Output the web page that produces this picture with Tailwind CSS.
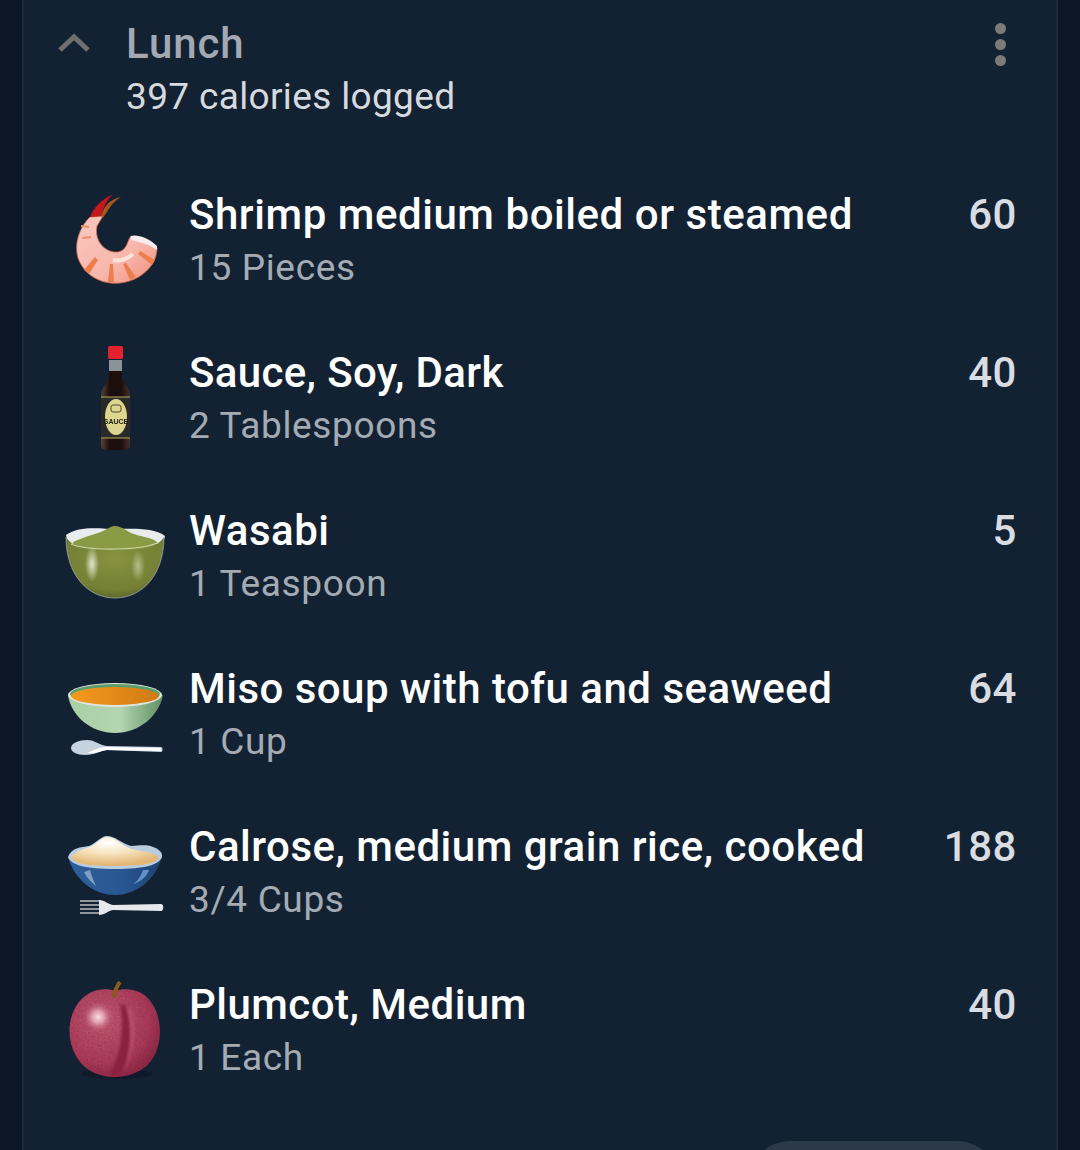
<!DOCTYPE html>
<html lang="en">
<head>
    <meta charset="UTF-8">
    <meta name="viewport" content="width=device-width, initial-scale=1.0">
    <title>Lunch</title>
    <script src="https://cdn.jsdelivr.net/npm/@tailwindcss/browser@4"></script>
</head>
<body class="bg-[#0c1828] font-['Roboto',sans-serif]">

    <!-- shared grain used on the plum -->
    <svg class="absolute h-0 w-0">
        <defs>
            <filter id="grain" x="0" y="0" width="100%" height="100%">
                <feTurbulence type="fractalNoise" baseFrequency="0.55" numOctaves="2" seed="4"/>
                <feColorMatrix values="0 0 0 0 0.12  0 0 0 0 0.02  0 0 0 0 0.06  1.6 0 0 0 -0.55"/>
                <feComposite in2="SourceGraphic" operator="in"/>
            </filter>
        </defs>
    </svg>

    <div class="relative mx-[22px] h-[1150px] overflow-hidden border-x-2 border-[#1a2a3c] bg-[#132233]">

        <!-- header -->
        <div class="flex h-[159px] items-start pt-[19px]">
            <svg class="ml-[33px] mt-[13px] h-[22px] w-[34px]" viewBox="0 0 34 22" fill="none">
                <path d="M3 18 L17 5 L31 18" stroke="#6f6f70" stroke-width="5"/>
            </svg>
            <div class="ml-[35px]">
                <div class="text-[42px] font-medium leading-[50px] tracking-[0.9px] text-[#a2a9b3]">Lunch</div>
                <div class="text-[37px] leading-[56px] tracking-[0.35px] text-[#d6dadf]">397 calories logged</div>
            </div>
            <div class="ml-auto mr-[50px] mt-[4px] flex flex-col gap-[5px]">
                <div class="h-[11px] w-[11px] rounded-full bg-[#7b7b7c]"></div>
                <div class="h-[11px] w-[11px] rounded-full bg-[#7b7b7c]"></div>
                <div class="h-[11px] w-[11px] rounded-full bg-[#7b7b7c]"></div>
            </div>
        </div>

        <!-- food rows -->
        <div class="flex h-[158px] items-center pr-[39px]">
            <svg class="ml-[41px] h-[100px] w-[100px] shrink-0 overflow-visible blur-[0.5px]" viewBox="0 0 100 100">
                <defs>
                    <linearGradient id="shrimpBody" x1="0" y1="0" x2="1" y2="1">
                        <stop offset="0" stop-color="#f7c9c2"/>
                        <stop offset="0.6" stop-color="#f9b6ab"/>
                        <stop offset="1" stop-color="#ee8f78"/>
                    </linearGradient>
                </defs>
                <path d="M25 29 C14 40 9 56 13 70 C19 87 36 97 55 95 C75 93 92 78 92 60 L66 48 C62 52 63 62 53 64 C40 65 29 53 32 38 L38 28 Z" fill="url(#shrimpBody)" stroke="#c9694a" stroke-width="0.8"/>
                <path d="M25 29 C29 19 36 12 48 6 C42 12 39 18 36 28 Z" fill="#c4161c"/>
                <path d="M36 28 C39 18 45 11 56 9 C47 14 44 21 38 30 Z" fill="#a8561c"/>
                <path d="M66 48 C72 46 84 50 92 58 L92 62 C84 56 74 54 66 52 Z" fill="#f4efee"/>
                <g fill="#ee7d4d">
                    <path d="M30 69 L33 72 L24 86 L19 82 Z"/>
                    <path d="M45 76 L48 76 L49 94 L43 94 Z"/>
                    <path d="M58 76 L61 75 L71 89 L65 92 Z"/>
                    <path d="M73 66 L75 63 L90 72 L87 77 Z"/>
                </g>
                <path d="M17 50 L26 49 M16 38 L24 39" stroke="#ee8d6a" stroke-width="2"/>
                <path d="M48 72 C56 74 62 71 68 66" stroke="#fde3da" stroke-width="4" fill="none"/>
            </svg>
            <div class="ml-[24px] mt-[8px] flex-1">
                <div class="flex items-center justify-between">
                    <div class="text-[42px] font-medium leading-[52px] tracking-[0.55px] text-white">Shrimp medium boiled or steamed</div>
                    <div class="pt-[1px] text-[42px] font-medium leading-[52px] tracking-[0.55px] text-[#d9dce0]">60</div>
                </div>
                <div class="-mt-px text-[37px] leading-[56px] tracking-[0.65px] text-[#a4abb3]">15 Pieces</div>
            </div>
        </div>

        <div class="flex h-[158px] items-center pr-[39px]">
            <svg class="ml-[41px] h-[100px] w-[100px] shrink-0 overflow-visible blur-[0.5px]" viewBox="0 0 100 100">
                <defs>
                    <linearGradient id="bottleGlass" x1="0" y1="0" x2="1" y2="0">
                        <stop offset="0" stop-color="#55413a"/>
                        <stop offset="0.3" stop-color="#1c0e0c"/>
                        <stop offset="0.7" stop-color="#1c0e0c"/>
                        <stop offset="1" stop-color="#4a3029"/>
                    </linearGradient>
                </defs>
                <path d="M44 14 L57 14 L57 30 C57 38 65 38 65 52 L65 100 C65 102 62 104 58 104 L43 104 C39 104 36 102 36 100 L36 52 C36 38 44 38 44 30 Z" fill="url(#bottleGlass)"/>
                <path d="M44 14 H57 V25 H44 Z" fill="#8b9299"/>
                <rect x="43" y="0" width="15" height="13" rx="1.5" fill="#e12330"/>
                <rect x="36" y="51" width="29" height="41" fill="#2a2a28"/>
                <path d="M36 51 H65 M36 92 H65" stroke="#b8a85a" stroke-width="1.2"/>
                <ellipse cx="51" cy="71" rx="11" ry="18" fill="#dcd68e"/>
                <rect x="46" y="59" width="10" height="7" rx="2" fill="none" stroke="#4f4b2c" stroke-width="1"/>
                <text x="51" y="78" text-anchor="middle" font-family="Liberation Sans" font-size="7" font-weight="700" fill="#1c1a0e">SAUCE</text>
            </svg>
            <div class="ml-[24px] mt-[8px] flex-1">
                <div class="flex items-center justify-between">
                    <div class="text-[42px] font-medium leading-[52px] tracking-[0.35px] text-white">Sauce, Soy, Dark</div>
                    <div class="pt-[1px] text-[42px] font-medium leading-[52px] tracking-[0.55px] text-[#d9dce0]">40</div>
                </div>
                <div class="-mt-px text-[37px] leading-[56px] tracking-[0.65px] text-[#a4abb3]">2 Tablespoons</div>
            </div>
        </div>

        <div class="flex h-[158px] items-center pr-[39px]">
            <svg class="ml-[41px] h-[100px] w-[100px] shrink-0 overflow-visible blur-[0.5px]" viewBox="0 0 100 100">
                <defs>
                    <radialGradient id="wasabiBowl" cx="0.5" cy="0.35" r="0.75">
                        <stop offset="0" stop-color="#87933f"/>
                        <stop offset="0.7" stop-color="#727f35"/>
                        <stop offset="1" stop-color="#4c5626"/>
                    </radialGradient>
                    <radialGradient id="wasabiShine">
                        <stop offset="0" stop-color="#eef0dc"/>
                        <stop offset="1" stop-color="#eef0dc" stop-opacity="0"/>
                    </radialGradient>
                </defs>
                <path d="M1 31 C14 21 38 25 50 25 C66 25 88 23 100 32 L98 40 L3 40 Z" fill="#e8ecef"/>
                <path d="M8 38 C20 32 34 30 44 24 C52 19 58 25 66 29 C76 33 86 33 92 38 L90 46 L10 46 Z" fill="#8b9a45"/>
                <path d="M1 33 C1 70 22 94 50 94 C78 94 99 70 99 33 C92 44 78 46 50 46 C22 46 8 44 1 33 Z" fill="url(#wasabiBowl)"/>
                <path d="M6 40 C22 47 78 47 94 38" stroke="#c9d2a4" stroke-width="1.2" fill="none"/>
                <ellipse cx="27" cy="60" rx="7" ry="18" fill="url(#wasabiShine)" opacity="0.9"/>
                <ellipse cx="73" cy="62" rx="7" ry="16" fill="url(#wasabiShine)" opacity="0.5"/>
                <path d="M1 33 C1 70 22 94 50 94 C78 94 99 70 99 33" stroke="#aab1b6" stroke-width="1" fill="none" opacity="0.7"/>
            </svg>
            <div class="ml-[24px] mt-[8px] flex-1">
                <div class="flex items-center justify-between">
                    <div class="text-[42px] font-medium leading-[52px] tracking-[0.5px] text-white">Wasabi</div>
                    <div class="pt-[1px] text-[42px] font-medium leading-[52px] tracking-[0.55px] text-[#d9dce0]">5</div>
                </div>
                <div class="-mt-px text-[37px] leading-[56px] tracking-[0.65px] text-[#a4abb3]">1 Teaspoon</div>
            </div>
        </div>

        <div class="flex h-[158px] items-center pr-[39px]">
            <svg class="ml-[41px] h-[100px] w-[100px] shrink-0 overflow-visible blur-[0.5px]" viewBox="0 0 100 100">
                <defs>
                    <linearGradient id="misoBowl" x1="0" y1="0" x2="1" y2="0">
                        <stop offset="0" stop-color="#a9cfa6"/>
                        <stop offset="0.55" stop-color="#b4d5b0"/>
                        <stop offset="1" stop-color="#5f8f63"/>
                    </linearGradient>
                    <linearGradient id="misoSoup" x1="0" y1="0" x2="1" y2="0">
                        <stop offset="0" stop-color="#f59a1e"/>
                        <stop offset="1" stop-color="#cf7a14"/>
                    </linearGradient>
                </defs>
                <path d="M3 33 C6 54 26 71 50 71 C74 71 94 54 98 33 Z" fill="url(#misoBowl)"/>
                <ellipse cx="50" cy="33" rx="47" ry="12" fill="#dfe8dc"/>
                <ellipse cx="50" cy="32" rx="45" ry="10" fill="#5f9c6b"/>
                <ellipse cx="50" cy="34" rx="44" ry="9" fill="url(#misoSoup)"/>
                <path d="M6 86 C6 81 14 78 22 78 C30 78 34 83 42 84 L96 85 C98 85 98 90 96 90 L42 88 C34 89 30 93 20 93 C12 93 6 90 6 86 Z" fill="#c6d3de"/>
                <path d="M22 91 C30 88 34 85 42 85 L96 86 L96 89 L42 88 C36 89 30 92 22 91 Z" fill="#ffffff"/>
            </svg>
            <div class="ml-[24px] mt-[8px] flex-1">
                <div class="flex items-center justify-between">
                    <div class="text-[42px] font-medium leading-[52px] tracking-[0.48px] text-white">Miso soup with tofu and seaweed</div>
                    <div class="pt-[1px] text-[42px] font-medium leading-[52px] tracking-[0.55px] text-[#d9dce0]">64</div>
                </div>
                <div class="-mt-px text-[37px] leading-[56px] tracking-[0.65px] text-[#a4abb3]">1 Cup</div>
            </div>
        </div>

        <div class="flex h-[158px] items-center pr-[39px]">
            <svg class="ml-[41px] h-[100px] w-[100px] shrink-0 overflow-visible blur-[0.5px]" viewBox="0 0 100 100">
                <defs>
                    <radialGradient id="riceMound" cx="0.42" cy="0.2" r="0.75">
                        <stop offset="0" stop-color="#ffffff"/>
                        <stop offset="0.45" stop-color="#f8e6c4"/>
                        <stop offset="1" stop-color="#e3b877"/>
                    </radialGradient>
                    <linearGradient id="riceBowl" x1="0" y1="0" x2="1" y2="0">
                        <stop offset="0" stop-color="#2f5f9e"/>
                        <stop offset="0.6" stop-color="#285690"/>
                        <stop offset="1" stop-color="#1f4270"/>
                    </linearGradient>
                </defs>
                <path d="M3 37 C8 56 26 75 50 75 C74 75 92 56 97 37 Z" fill="url(#riceBowl)"/>
                <path d="M3 37 C6 28 16 27 24 26 C30 24 36 16 42 16 C50 16 56 23 66 26 C74 26 80 24 88 27 C94 29 98 33 97 37 C94 45 80 49 50 49 C20 49 6 45 3 37 Z" fill="#b9cde0"/>
                <path d="M6 38 C10 30 20 29 27 26 C32 23 37 17 42 17 C50 17 56 25 66 29 C76 31 90 32 94 38 C90 44 76 46 50 46 C24 46 10 44 6 38 Z" fill="url(#riceMound)"/>
                <path d="M19 52 C22 58 26 62 31 66 C28 60 26 54 25 50 Z" fill="#a7bcd4" opacity="0.7"/>
                <path d="M78 50 C76 56 72 62 68 64 C76 62 82 56 84 50 Z" fill="#6ea3dc" opacity="0.8"/>
                <g stroke="#aeb4ba" stroke-width="1.6">
                    <path d="M15 81 H36"/>
                    <path d="M15 85 H36"/>
                    <path d="M15 89 H36"/>
                    <path d="M15 93 H36"/>
                </g>
                <path d="M34 80 C40 80 42 84 48 85 L96 84 C99 84 99 91 96 91 L48 90 C42 91 40 95 34 95 Z" fill="#e6e9ec"/>
            </svg>
            <div class="ml-[24px] mt-[8px] flex-1">
                <div class="flex items-center justify-between">
                    <div class="text-[42px] font-medium leading-[52px] tracking-[0.5px] text-white">Calrose, medium grain rice, cooked</div>
                    <div class="pt-[1px] text-[42px] font-medium leading-[52px] tracking-[0.55px] text-[#d9dce0]">188</div>
                </div>
                <div class="-mt-px text-[37px] leading-[56px] tracking-[0.65px] text-[#a4abb3]">3/4 Cups</div>
            </div>
        </div>

        <div class="flex h-[158px] items-center pr-[39px]">
            <svg class="ml-[41px] h-[100px] w-[100px] shrink-0 overflow-visible blur-[0.5px]" viewBox="0 0 100 100">
                <defs>
                    <radialGradient id="plumSkin" cx="0.38" cy="0.35" r="0.75">
                        <stop offset="0" stop-color="#c25a70"/>
                        <stop offset="0.65" stop-color="#ad3a58"/>
                        <stop offset="1" stop-color="#85203f"/>
                    </radialGradient>
                    <radialGradient id="plumShine">
                        <stop offset="0" stop-color="#f8dfe6"/>
                        <stop offset="0.4" stop-color="#eeb7c6" stop-opacity="0.75"/>
                        <stop offset="1" stop-color="#c45a76" stop-opacity="0"/>
                    </radialGradient>
                </defs>
                <ellipse cx="52" cy="96" rx="36" ry="5" fill="#0e1a2a"/>
                <path d="M50 13 C60 9 78 11 86 24 C98 40 97 66 88 80 C80 94 62 99 50 99 C36 99 20 94 11 78 C1 60 3 38 14 24 C24 11 40 9 50 13 Z" fill="url(#plumSkin)"/>
                <path d="M50 13 C60 9 78 11 86 24 C98 40 97 66 88 80 C80 94 62 99 50 99 C36 99 20 94 11 78 C1 60 3 38 14 24 C24 11 40 9 50 13 Z" fill="#000" filter="url(#grain)" opacity="0.4"/>
                <path class="blur-[1.5px]" d="M55 26 C60 46 56 80 44 97 C50 98 54 97 56 96 C66 78 68 46 60 27 Z" fill="#8a2140"/>
                <path class="blur-[1.5px]" d="M62 30 C69 48 67 76 58 94 C68 80 73 50 65 31 Z" fill="#c45a76" opacity="0.75"/>
                <circle cx="33" cy="39" r="15" fill="url(#plumShine)"/>
                <path d="M48 19 C50 14 51 9 55 4" stroke="#8a5a1e" stroke-width="4" fill="none"/>
            </svg>
            <div class="ml-[24px] mt-[8px] flex-1">
                <div class="flex items-center justify-between">
                    <div class="text-[42px] font-medium leading-[52px] tracking-[0.48px] text-white">Plumcot, Medium</div>
                    <div class="pt-[1px] text-[42px] font-medium leading-[52px] tracking-[0.55px] text-[#d9dce0]">40</div>
                </div>
                <div class="-mt-px text-[37px] leading-[56px] tracking-[0.65px] text-[#a4abb3]">1 Each</div>
            </div>
        </div>

        <!-- button peeking in from below -->
        <div class="absolute left-[726px] top-[1141px] h-[60px] w-[247px] rounded-t-[40px] bg-[#2c3a48]"></div>
    </div>

</body>
</html>
